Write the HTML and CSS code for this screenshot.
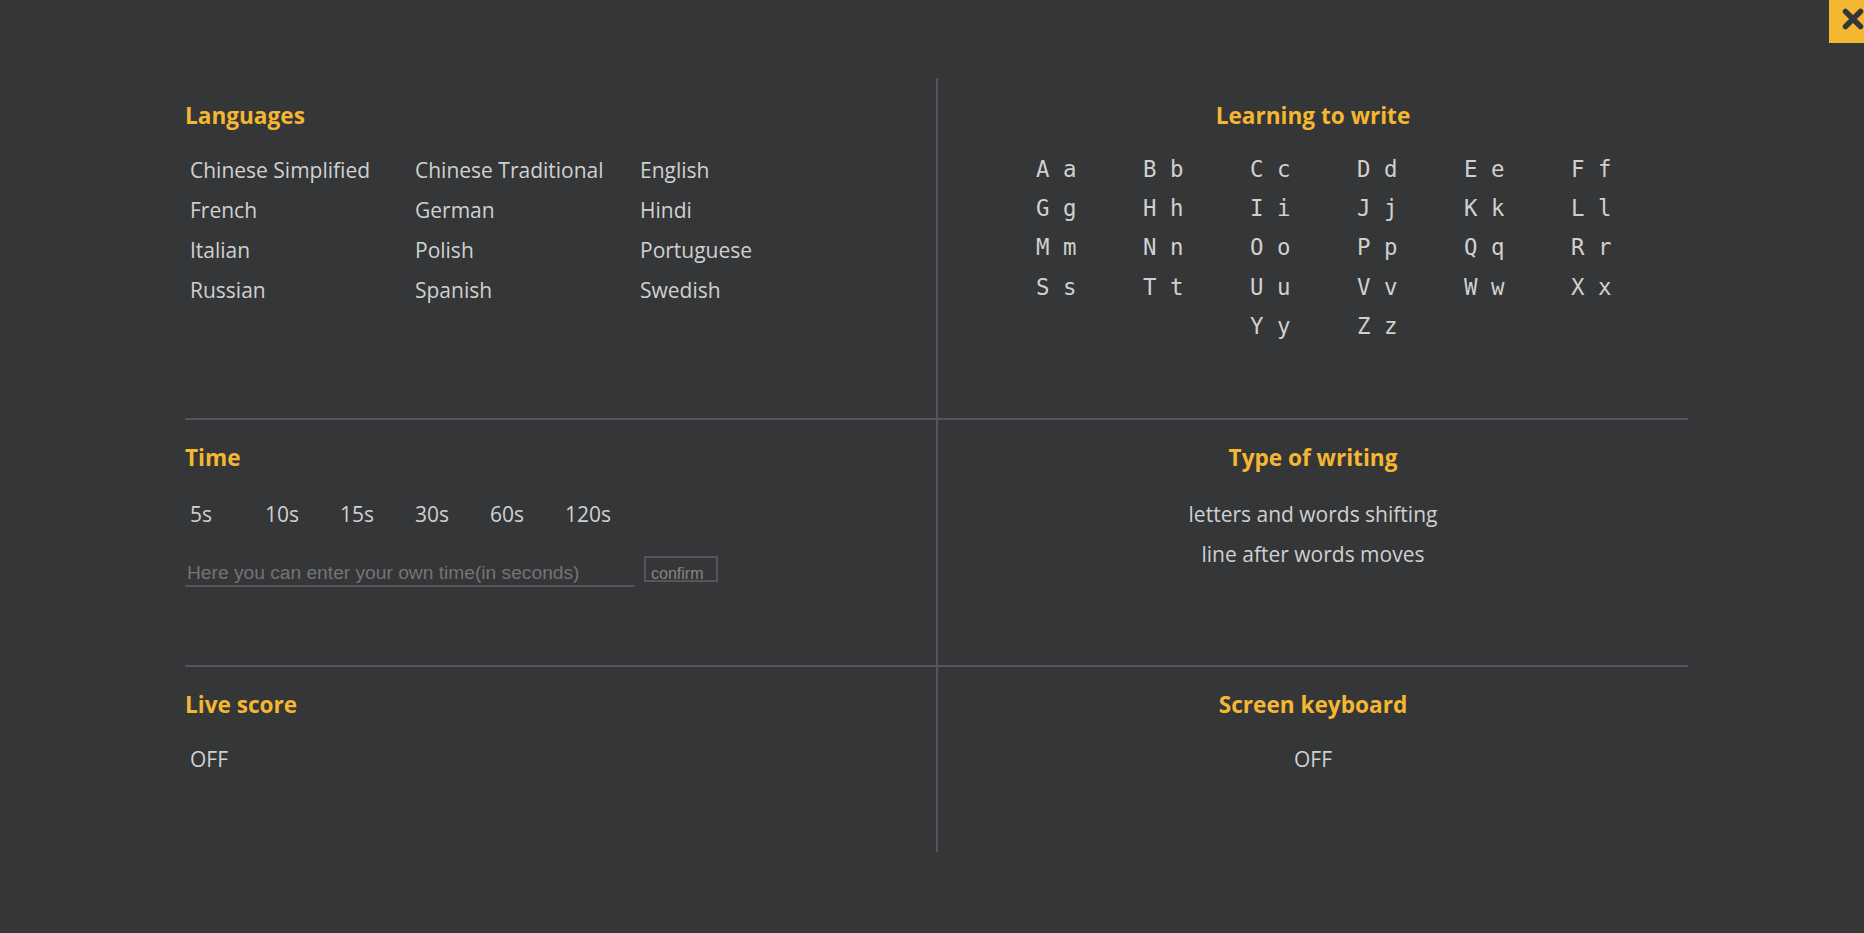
FILE: index.html
```html
<!DOCTYPE html>
<html lang="en">
<head>
<meta charset="utf-8">
<title>Settings</title>
<link rel="stylesheet" href="styles.css">
</head>
<body>
<div class="close" aria-label="close">
  <svg width="22" height="22" viewBox="0 0 22 22"><path d="M3.5 3.5 L18.5 18.5 M18.5 3.5 L3.5 18.5" stroke="#353638" stroke-width="5.5" stroke-linecap="round" fill="none"/></svg>
</div>
<main class="settings">
  <section class="cell left row-top">
    <h2 class="title">Languages</h2>
    <div class="lang-grid">
      <span class="opt">Chinese Simplified</span>
      <span class="opt">Chinese Traditional</span>
      <span class="opt">English</span>
      <span class="opt">French</span>
      <span class="opt">German</span>
      <span class="opt">Hindi</span>
      <span class="opt">Italian</span>
      <span class="opt">Polish</span>
      <span class="opt">Portuguese</span>
      <span class="opt">Russian</span>
      <span class="opt">Spanish</span>
      <span class="opt">Swedish</span>
    </div>
  </section>
  <section class="cell right row-top">
    <h2 class="title">Learning to write</h2>
    <div class="letters">
      <span class="letter">A a</span><span class="letter">B b</span><span class="letter">C c</span><span class="letter">D d</span><span class="letter">E e</span><span class="letter">F f</span>
      <span class="letter">G g</span><span class="letter">H h</span><span class="letter">I i</span><span class="letter">J j</span><span class="letter">K k</span><span class="letter">L l</span>
      <span class="letter">M m</span><span class="letter">N n</span><span class="letter">O o</span><span class="letter">P p</span><span class="letter">Q q</span><span class="letter">R r</span>
      <span class="letter">S s</span><span class="letter">T t</span><span class="letter">U u</span><span class="letter">V v</span><span class="letter">W w</span><span class="letter">X x</span>
      <span class="letter">Y y</span><span class="letter">Z z</span>
    </div>
  </section>
  <section class="cell left row-mid">
    <h2 class="title">Time</h2>
    <div class="times">
      <span class="time">5s</span><span class="time">10s</span><span class="time">15s</span><span class="time">30s</span><span class="time">60s</span><span class="time">120s</span>
    </div>
    <div class="custom-time">
      <input class="time-input" type="text" placeholder="Here you can enter your own time(in seconds)">
      <div class="confirm">confirm</div>
    </div>
  </section>
  <section class="cell right row-mid">
    <h2 class="title">Type of writing</h2>
    <div class="modes">
      <div class="mode">letters and words shifting</div>
      <div class="mode">line after words moves</div>
    </div>
  </section>
  <section class="cell left row-bottom">
    <h2 class="title">Live score</h2>
    <div class="toggle-row"><span class="opt">OFF</span></div>
  </section>
  <section class="cell right row-bottom">
    <h2 class="title">Screen keyboard</h2>
    <div class="toggle-row"><span class="opt">OFF</span></div>
  </section>
</main>
</body>
</html>
```

FILE: styles.css
```css
html, body {
  margin: 0;
  padding: 0;
  height: 100%;
  background: #353638;
}

body {
  font-family: "Open Sans", "Noto Sans", sans-serif;
  color: #d0d0d0;
  overflow: hidden;
  position: relative;
}

.close {
  position: absolute;
  top: 0;
  right: 0;
  width: 35px;
  height: 43px;
  background: #f5b731;
  overflow: hidden;
}

.close svg {
  display: block;
  margin: 8px 0 0 13px;
}

.settings {
  display: grid;
  grid-template-columns: 753px 750px;
  grid-template-rows: 342px 247px 185px;
  width: 1503px;
  margin: 78px 0 0 185px;
}

.cell {
  box-sizing: border-box;
  padding-top: 23px;
}

.cell.left {
  border-right: 2px solid #55565a;
}

.cell.row-top,
.cell.row-mid {
  border-bottom: 2px solid #55565a;
}

.cell.right {
  text-align: center;
}

.title {
  margin: 0;
  font-size: 22.6px;
  line-height: 30px;
  font-weight: 700;
  color: #f5b731;
}

.opt,
.time,
.mode {
  font-size: 21px;
  line-height: 40px;
}

.lang-grid {
  display: grid;
  grid-template-columns: repeat(3, 225px);
  margin-top: 19px;
}

.lang-grid .opt {
  padding-left: 5px;
}

.letters {
  display: flex;
  flex-wrap: wrap;
  justify-content: center;
  width: 642px;
  margin: 19px auto 0;
}

.letter {
  box-sizing: border-box;
  width: 107px;
  padding-left: 44px;
  text-align: left;
  font-family: "DejaVu Sans Mono", "Liberation Mono", monospace;
  font-size: 22.4px;
  line-height: 39.2px;
  white-space: pre;
}

.times {
  display: flex;
  margin-top: 21px;
}

.time {
  width: 75px;
  box-sizing: border-box;
  padding-left: 5px;
}

.custom-time {
  display: flex;
  align-items: flex-start;
  margin-top: 22px;
}

.time-input {
  box-sizing: border-box;
  width: 450px;
  height: 31px;
  padding: 4px 2px 0;
  margin: 0;
  border: none;
  border-bottom: 2px solid #55565a;
  background: transparent;
  outline: none;
  font-family: "Liberation Sans", Arial, sans-serif;
  font-size: 19.2px;
  color: #d0d0d0;
}

.time-input::placeholder {
  color: #747474;
}

.confirm {
  box-sizing: border-box;
  width: 74px;
  height: 26px;
  margin-left: 9px;
  padding: 7px 0 0 5px;
  border: 2px solid #55565a;
  overflow: hidden;
  font-family: "Liberation Sans", Arial, sans-serif;
  font-size: 16px;
  line-height: normal;
  color: #858585;
}

.modes {
  margin-top: 21px;
}

.toggle-row {
  margin-top: 19px;
}

.row-bottom.left .opt {
  padding-left: 5px;
}
```
